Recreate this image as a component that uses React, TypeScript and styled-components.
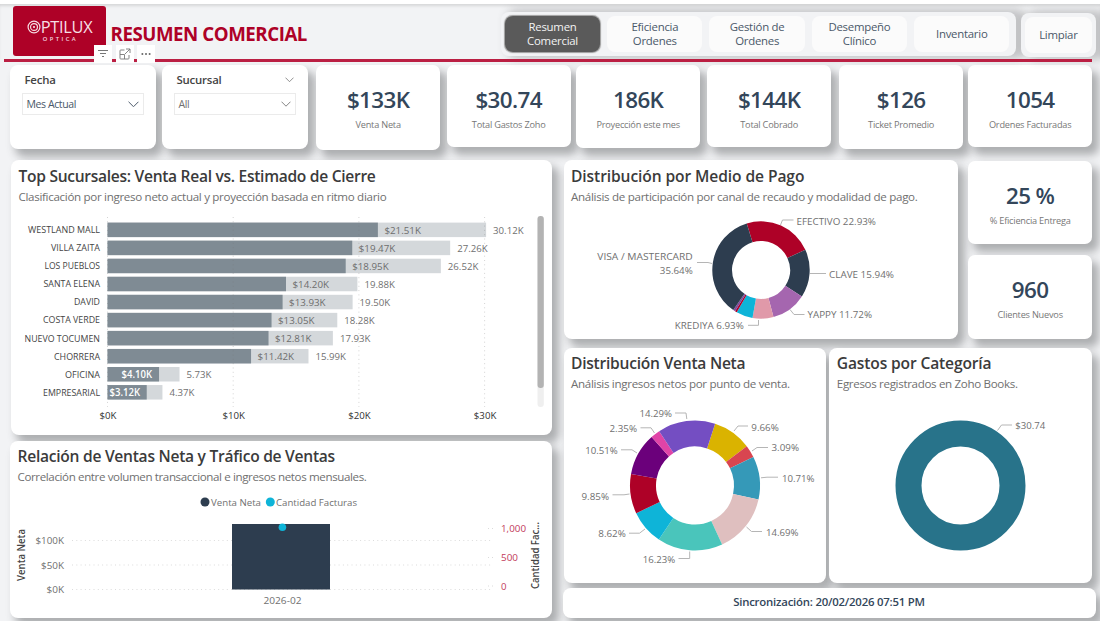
import React from "react";
import styled, { createGlobalStyle } from "styled-components";

const Global = createGlobalStyle`
  * { box-sizing: border-box; }
  html, body { margin: 0; padding: 0; }
  body { width: 1100px; height: 621px; overflow: hidden; background: #fff;
    font-family: "Segoe UI", "Open Sans", "Noto Sans", sans-serif; }
`;

const ink = "#33465a";
const crimson = "#ae0127";
const cardShadow = "6px 7px 9px 1px rgba(60, 62, 66, 0.38)";

const Page = styled.div`
  display: flex;
  flex-direction: column;
  width: 1100px;
  height: 617px;
  margin-top: 4px;
  background: #f2f3f5;
  overflow: hidden;
`;

const Header = styled.header`
  position: relative;
  display: flex;
  align-items: flex-start;
  height: 55px;
  padding-left: 13px;
  box-shadow: inset 0 3px 3px -1px #d6d7d8;
`;

const Logo = styled.div`
  display: flex;
  flex-direction: column;
  align-items: center;
  width: 93px;
  height: 49.5px;
  margin-top: 2px;
  padding-top: 12px;
  border-radius: 3px;
  background: ${crimson};
  color: #f6dfe4;
`;

const LogoWord = styled.div`
  display: flex;
  align-items: center;
  height: 18px;
  font: 400 16.4px/18px "Open Sans", sans-serif;
  letter-spacing: -0.3px;
`;

const LogoSub = styled.div`
  margin-left: 2px;
  font: 600 5.6px/6px Lato, sans-serif;
  letter-spacing: 2.5px;
`;

const PageTitle = styled.h1`
  width: 390.4px;
  margin: 17px 0 0 4.5px;
  color: ${crimson};
  font-size: 18.7px;
  line-height: 26px;
  font-weight: 700;
  letter-spacing: -0.45px;
`;

const Nav = styled.nav<{ $w: number; $ml?: number; $top?: number }>`
  display: flex;
  gap: 7px;
  width: ${(p) => p.$w}px;
  height: ${(p) => 44 - (p.$top ? 0.5 : 0)}px;
  margin: ${(p) => 8 + (p.$top ?? 0)}px 0 0 ${(p) => p.$ml ?? 0}px;
  padding: 3.5px 4px;
  border-radius: 8px;
  background: #f2f3f5;
  box-shadow: 8px 0 8px 3px rgba(60, 62, 66, 0.26);
`;

const Tab = styled.button<{ $active?: boolean; $w?: number }>`
  width: ${(p) => p.$w ?? 95.3}px;
  height: 36px;
  padding: 0;
  border: 0;
  border-radius: 8px;
  background: ${(p) => (p.$active ? "#5a5a5a" : "#fbfbfb")};
  color: ${(p) => (p.$active ? "#f3f3f3" : "#4a5869")};
  font: 400 11.4px/14px "Open Sans", sans-serif;
  letter-spacing: -0.25px;
  box-shadow: ${(p) => (p.$active ? "0 0 1px 0.5px #9d9d9d" : "none")};
`;

const VisualTools = styled.div`
  position: absolute;
  z-index: 2;
  left: 94px;
  top: 41px;
  display: flex;
  gap: 3.5px;
`;

const Tool = styled.span`
  display: flex;
  align-items: center;
  justify-content: center;
  width: 18px;
  height: 18px;
  background: #fff;
`;

const Rule = styled.div`
  position: relative;
  z-index: 1;
  flex: none;
  height: 2.5px;
  margin: 0 8px 3px 4px;
  background: #bb1f43;
`;

const CardRow = styled.div`
  display: grid;
  grid-template-columns: 152px 154px 130.5px 129.5px 131px 132px 129px 124.5px;
  align-items: start;
  height: 95.5px;
  padding: 0.5px 0 0 10px;
`;

const Card = styled.section<{ $w: number; $h: number; $r?: number }>`
  display: flex;
  flex-direction: column;
  flex: none;
  width: ${(p) => p.$w}px;
  height: ${(p) => p.$h}px;
  border-radius: ${(p) => p.$r ?? 8}px;
  background: #fff;
  box-shadow: ${cardShadow};
`;

const Slicer = styled(Card)`
  padding: 7px 12px 0 11.5px;
`;

const SlicerHead = styled.div`
  display: flex;
  justify-content: space-between;
  align-items: center;
  height: 15px;
  padding: 0 2px 0 3px;
  color: #444;
  font-size: 11.4px;
  font-weight: 600;
  letter-spacing: -0.2px;
`;

const Select = styled.div<{ $color: string }>`
  display: flex;
  justify-content: space-between;
  align-items: center;
  height: 22px;
  margin-top: 6px;
  padding: 0 4px;
  border: 1px solid #ebebeb;
  color: ${(p) => p.$color};
  font-size: 10.5px;
  letter-spacing: -0.4px;
`;

const Kpi = styled(Card)`
  align-items: center;
  padding-top: 19px;
`;

const KpiValue = styled.div`
  height: 31px;
  color: ${ink};
  font-size: 22.4px;
  line-height: 31px;
  font-weight: 600;
  letter-spacing: -0.6px;
`;

const KpiLabel = styled.div`
  margin-top: 2px;
  color: #777;
  font-size: 9.2px;
  line-height: 16px;
  letter-spacing: -0.22px;
`;

const Body = styled.main`
  display: flex;
  align-items: flex-start;
  gap: 12px;
  padding-left: 10px;
`;

const Column = styled.div<{ $gap: number; $top?: number }>`
  display: flex;
  flex-direction: column;
  align-items: flex-end;
  gap: ${(p) => p.$gap}px;
  padding-top: ${(p) => p.$top ?? 0}px;
`;

const Row = styled.div<{ $gap: number }>`
  display: flex;
  gap: ${(p) => p.$gap}px;
`;

const RightColumn = styled.div`
  display: flex;
  flex-direction: column;
  gap: 8.5px;
`;

const Panel = styled(Card)<{ $top?: number }>`
  padding-top: ${(p) => p.$top ?? 5.5}px;
`;

const PanelTitle = styled.h2<{ $track: number }>`
  margin: 0 0 0 7.5px;
  color: #3b3b3b;
  font-size: 15.6px;
  line-height: 20px;
  font-weight: 600;
  letter-spacing: ${(p) => p.$track}px;
  white-space: nowrap;
`;

const PanelNote = styled.p<{ $track: number }>`
  margin: 3px 0 0 7.5px;
  color: #707070;
  font-size: 11.6px;
  line-height: 16px;
  letter-spacing: ${(p) => p.$track}px;
  white-space: nowrap;
`;

const Chart = styled.svg`
  display: block;
  flex: none;
  margin-top: auto;
  overflow: visible;
  font-family: "Open Sans", sans-serif;
  font-size: 9.8px;
`;

const Sync = styled(Card)`
  align-items: center;
  justify-content: center;
  margin: -3px 0 0 -1px;
  padding-bottom: 4px;
  color: ${ink};
  font-size: 11.4px;
  font-weight: 600;
  letter-spacing: -0.22px;
`;

const Chevron = ({ size = 11, color = "#777" }) => (
  <svg width={size} height={size * 0.6} viewBox="0 0 10 6" fill="none" stroke={color} strokeWidth="0.9">
    <path d="M.5 .7 5 5.2 9.5 .7" />
  </svg>
);

interface LabelProps {
  x: number;
  y: number;
  w: number;
  children: string;
  fill?: string;
  anchor?: "start" | "middle" | "end";
  weight?: number;
  size?: number;
}

const Label = ({ x, y, w, children, fill = "#707070", anchor = "start", weight = 400, size }: LabelProps) => (
  <text x={x} y={y} textLength={w} lengthAdjust="spacingAndGlyphs" textAnchor={anchor} fill={fill} fontWeight={weight} fontSize={size}>
    {children}
  </text>
);

type Branch = [name: string, nameWidth: number, actual: number, estimate: number];

const branches: Branch[] = [
  ["WESTLAND MALL", 72, 21.51, 30.12],
  ["VILLA ZAITA", 49, 19.47, 27.26],
  ["LOS PUEBLOS", 55.5, 18.95, 26.52],
  ["SANTA ELENA", 56.5, 14.2, 19.88],
  ["DAVID", 26, 13.93, 19.5],
  ["COSTA VERDE", 57, 13.05, 18.28],
  ["NUEVO TOCUMEN", 75.5, 12.81, 17.93],
  ["CHORRERA", 46, 11.42, 15.99],
  ["OFICINA", 35, 4.1, 5.73],
  ["EMPRESARIAL", 57, 3.12, 4.37],
];

const BranchChart = () => {
  const x0 = 107.5;
  const k = 12.57;
  return (
    <Chart width="540" height="226" viewBox="11 209 540 226">
      {branches.map(([name, nw, actual, est], i) => {
        const y = 222.6 + i * 18.05;
        const inside = actual < 5;
        const end = x0 + actual * k;
        return (
          <g key={name}>
            <rect x={x0} y={y} width={est * k} height="14.5" fill="#d4d8db" />
            <rect x={x0} y={y} width={actual * k} height="14.5" fill="#7f8b94" />
            <Label x={100} y={y + 10.6} w={nw} anchor="end" fill="#444">{name}</Label>
            <Label
              x={inside ? Math.max(end - 37.5, 109.5) : end + 6.5}
              y={y + 11.2}
              w={inside ? 30.5 : 36.5}
              fill={inside ? "#fff" : "#6d6d6d"}
              weight={inside ? 600 : 400}
            >
              {`$${actual.toFixed(2)}K`}
            </Label>
            <Label x={x0 + est * k + 7} y={y + 11.2} w={est < 10 ? 25 : 30.5}>{`${est.toFixed(2)}K`}</Label>
          </g>
        );
      })}
      {[0, 10, 20, 30].map((v) => (
        <g key={v}>
          <path d={`M${x0 + v * k} 217V407`} stroke="#777" strokeOpacity="0.4" strokeWidth="0.8" strokeDasharray="1 3.3" />
          <Label x={x0 + v * k + 0.5} y={419} w={v ? 22.5 : 17} anchor="middle" fill="#333">{`$${v}K`}</Label>
        </g>
      ))}
      <rect x="537.5" y="216" width="6.3" height="191" rx="3" fill="#efefef" />
      <rect x="537.5" y="216" width="6.3" height="172" rx="3" fill="#b3b3b3" />
    </Chart>
  );
};

const TrafficChart = () => (
  <Chart width="541" height="128" viewBox="10 490 541 128">
    <circle cx="205" cy="502" r="4.5" fill="#2d3d4f" />
    <Label x={211} y={505.7} w={50}>Venta Neta</Label>
    <circle cx="270.3" cy="502" r="4.5" fill="#0eb4d8" />
    <Label x={276} y={505.7} w={81}>Cantidad Facturas</Label>
    {[540.5, 565, 589.5].map((y) => (
      <path key={y} d={`M72 ${y}H491`} stroke="#aaa" strokeOpacity="0.6" strokeWidth="0.7" strokeDasharray="1 3.3" />
    ))}
    {[528.5, 557.5, 586].map((y) => (
      <path key={y} d={`M488 ${y}H496`} stroke="#ccc" strokeWidth="0.7" strokeDasharray="1 3" />
    ))}
    <rect x="232" y="524" width="98" height="65.5" fill="#2d3d4f" />
    <circle cx="282.4" cy="527.2" r="3.8" fill="#0eb4d8" />
    <Label x={64} y={543.8} w={28.5} anchor="end">$100K</Label>
    <Label x={64} y={568.6} w={23} anchor="end">$50K</Label>
    <Label x={64} y={593} w={17.5} anchor="end">$0K</Label>
    <Label x={501} y={532} w={25} fill="#c23a5b">1,000</Label>
    <Label x={501} y={560.7} w={17} fill="#c23a5b">500</Label>
    <Label x={501} y={589.5} w={5.5} fill="#c23a5b">0</Label>
    <Label x={282.5} y={603.5} w={38} anchor="middle">2026-02</Label>
    <g transform="translate(25 581) rotate(-90)">
      <Label x={0} y={0} w={52} fill="#444" weight={600}>Venta Neta</Label>
    </g>
    <g transform="translate(539 589) rotate(-90)">
      <Label x={0} y={0} w={67} fill="#444" weight={600}>Cantidad Fac...</Label>
    </g>
  </Chart>
);

interface DonutProps {
  cx: number;
  cy: number;
  outer: number;
  inner: number;
  start: number;
  slices: [share: number, color: string][];
}

const Donut = ({ cx, cy, outer, inner, start, slices }: DonutProps) => {
  const total = slices.reduce((s, [v]) => s + v, 0);
  const at = (deg: number, r: number) => {
    const a = (deg * Math.PI) / 180;
    return `${(cx + r * Math.sin(a)).toFixed(2)} ${(cy - r * Math.cos(a)).toFixed(2)}`;
  };
  let from = start;
  return (
    <>
      {slices.map(([share, color], i) => {
        const a = from;
        const b = a + (share / total) * 360;
        from = b;
        const large = b - a > 180 ? 1 : 0;
        return (
          <path
            key={i}
            fill={color}
            d={`M${at(a, outer)}A${outer} ${outer} 0 ${large} 1 ${at(b, outer)}L${at(b, inner)}A${inner} ${inner} 0 ${large} 0 ${at(a, inner)}Z`}
          />
        );
      })}
    </>
  );
};

const Leader = ({ d }: { d: string }) => <path d={d} fill="none" stroke="#b5b5b5" strokeWidth="1" />;

const PaymentChart = () => (
  <Chart width="394" height="130" viewBox="564 209 394 130">
    <Donut
      cx={761} cy={270} outer={48.7} inner={29} start={-17}
      slices={[
        [22.93, crimson], [15.94, "#2d3d4f"], [11.72, "#a566af"], [6.93, "#e099a9"],
        [5.5, "#0eb4d8"], [0.65, "#ae0127"], [0.69, "#7f4aa0"], [35.64, "#2d3d4f"],
      ]}
    />
    <Leader d="M780.5 225 782.5 220H793.5" />
    <Label x={796.5} y={224.8} w={79.5}>EFECTIVO 22.93%</Label>
    <Leader d="M810 273.5H826" />
    <Label x={829} y={278} w={65}>CLAVE 15.94%</Label>
    <Leader d="M790 309.5 794 314.5H804.5" />
    <Label x={807.5} y={318} w={64.5}>YAPPY 11.72%</Label>
    <Leader d="M758.5 320V325.3H748" />
    <Label x={674.8} y={329} w={69}>KREDIYA 6.93%</Label>
    <Leader d="M712 263.5 708 262.5H697" />
    <Label x={692.8} y={260} w={95.5} anchor="end">VISA / MASTERCARD</Label>
    <Label x={692.8} y={273.8} w={33} anchor="end">35.64%</Label>
  </Chart>
);

const NetSalesChart = () => (
  <Chart width="262" height="184" viewBox="564 398.5 262 184">
    <Donut
      cx={695} cy={485} outer={65} inner={39} start={18}
      slices={[
        [9.66, "#dab300"], [3.09, "#d94550"], [10.71, "#3599b8"], [14.69, "#dfbfbf"], [16.23, "#4ac5bb"],
        [8.62, "#0eb4d8"], [9.85, crimson], [10.51, "#6b007b"], [2.35, "#e044a7"], [14.29, "#744ec2"],
      ]}
    />
    <Leader d="M686.8 418.5 686 412.5H675" />
    <Label x={639.5} y={416.7} w={32.5}>14.29%</Label>
    <Leader d="M654.5 432.5 651 427.3H640.5" />
    <Label x={609.5} y={431.3} w={27.5}>2.35%</Label>
    <Leader d="M637 452.5 632 449.3H621" />
    <Label x={585.3} y={453.2} w={32.5}>10.51%</Label>
    <Leader d="M629.5 493.5 624 494.3H612.5" />
    <Label x={581.5} y={499} w={27.5}>9.85%</Label>
    <Leader d="M645 528.5 639.5 532.7H629" />
    <Label x={598.3} y={536.7} w={27.5}>8.62%</Label>
    <Leader d="M689.7 551V558H678.5" />
    <Label x={642.7} y={562.3} w={32.5}>16.23%</Label>
    <Leader d="M734 430.5 738 425.5H748" />
    <Label x={751.3} y={430.2} w={27.5}>9.66%</Label>
    <Leader d="M752 450.5 757 447H768" />
    <Label x={771.5} y={450.8} w={27.5}>3.09%</Label>
    <Leader d="M761 477.3 767 476.7H778" />
    <Label x={782} y={481} w={32.5}>10.71%</Label>
    <Leader d="M746.5 526.5 751.5 531H762" />
    <Label x={766} y={535} w={32.5}>14.69%</Label>
  </Chart>
);

const ExpenseChart = () => (
  <Chart width="262" height="184" viewBox="829.5 398.5 262 184">
    <circle cx="961" cy="485" r="52" fill="none" stroke="#28738a" strokeWidth="26" />
    <Leader d="M998 430 1002 424.5H1012.5" />
    <Label x={1015.8} y={428.8} w={30}>$30.74</Label>
  </Chart>
);

const kpis: [string, string, number][] = [
  ["$133K", "Venta Neta", 84.5],
  ["$30.74", "Total Gastos Zoho", 82],
  ["186K", "Proyección este mes", 83],
  ["$144K", "Total Cobrado", 82],
  ["$126", "Ticket Promedio", 83.5],
  ["1054", "Ordenes Facturadas", 82],
];

const Metric = ({ value, label, h }: { value: string; label: string; h: number }) => (
  <Kpi $w={124.3} $h={h} $r={7}>
    <KpiValue>{value}</KpiValue>
    <KpiLabel>{label}</KpiLabel>
  </Kpi>
);

export default function App() {
  return (
    <>
      <Global />
      <Page>
        <Header>
          <Logo>
            <LogoWord>
              <svg width="14" height="14" viewBox="0 0 13 13" fill="none" stroke="#f6dfe4">
                <circle cx="6.5" cy="6.5" r="5.5" strokeWidth="1.1" />
                <circle cx="6.5" cy="6.5" r="3.2" strokeWidth="1.1" />
                <circle cx="6.5" cy="6.5" r="1" fill="#f6dfe4" stroke="none" />
              </svg>
              PTILUX
            </LogoWord>
            <LogoSub>OPTICA</LogoSub>
          </Logo>
          <PageTitle>RESUMEN COMERCIAL</PageTitle>
          <Nav $w={515}>
            <Tab $active>Resumen<br />Comercial</Tab>
            <Tab>Eficiencia<br />Ordenes</Tab>
            <Tab>Gestión de<br />Ordenes</Tab>
            <Tab>Desempeño<br />Clínico</Tab>
            <Tab>Inventario</Tab>
          </Nav>
          <Nav $w={75} $ml={5} $top={1}>
            <Tab $w={67}>Limpiar</Tab>
          </Nav>
          <VisualTools>
            <Tool>
              <svg width="12" height="12" viewBox="0 0 12 12" stroke="#777" strokeWidth="1">
                <path d="M1 2.5H11M3 5.5H9M5 8.5H7" />
              </svg>
            </Tool>
            <Tool>
              <svg width="12" height="12" viewBox="0 0 12 12" fill="none" stroke="#777" strokeWidth="0.9">
                <path d="M5.5 2H1.8Q1 2 1 2.8V10.2Q1 11 1.8 11H9.2Q10 11 10 10.2V7M7 1H11V5M11 1 6 6M1 6.5H5.5V11" />
              </svg>
            </Tool>
            <Tool>
              <svg width="10" height="4" viewBox="0 0 10 4" fill="#666">
                <circle cx="1.4" cy="2" r="1" />
                <circle cx="5" cy="2" r="1" />
                <circle cx="8.6" cy="2" r="1" />
              </svg>
            </Tool>
          </VisualTools>
        </Header>
        <Rule />
        <CardRow>
          <Slicer $w={146} $h={84}>
            <SlicerHead>Fecha</SlicerHead>
            <Select $color="#4a5869">Mes Actual<Chevron color="#4a5869" /></Select>
          </Slicer>
          <Slicer $w={146} $h={84}>
            <SlicerHead>Sucursal<Chevron size={9} /></SlicerHead>
            <Select $color="#707070">All<Chevron size={10} /></Select>
          </Slicer>
          {kpis.map(([v, l, h]) => (
            <Metric key={l} value={v} label={l} h={h} />
          ))}
        </CardRow>
        <Body>
          <Column $gap={6}>
            <Panel $w={540.5} $h={275}>
              <PanelTitle $track={-0.3}>Top Sucursales: Venta Real vs. Estimado de Cierre</PanelTitle>
              <PanelNote $track={-0.32}>Clasificación por ingreso neto actual y proyección basada en ritmo diario</PanelNote>
              <BranchChart />
            </Panel>
            <Panel $w={541.5} $h={177} $top={5}>
              <PanelTitle $track={-0.27}>Relación de Ventas Neta y Tráfico de Ventas</PanelTitle>
              <PanelNote $track={-0.39}>Correlación entre volumen transaccional e ingresos netos mensuales.</PanelNote>
              <TrafficChart />
            </Panel>
          </Column>
          <RightColumn>
            <Row $gap={10}>
              <Panel $w={394.5} $h={179}>
                <PanelTitle $track={-0.1}>Distribución por Medio de Pago</PanelTitle>
                <PanelNote $track={-0.3}>Análisis de participación por canal de recaudo y modalidad de pago.</PanelNote>
                <PaymentChart />
              </Panel>
              <Column $gap={11} $top={1}>
                <Metric value="25 %" label="% Eficiencia Entrega" h={83} />
                <Metric value="960" label="Clientes Nuevos" h={84} />
              </Column>
            </Row>
            <Row $gap={3.5}>
              <Panel $w={262.3} $h={235}>
                <PanelTitle $track={-0.25}>Distribución Venta Neta</PanelTitle>
                <PanelNote $track={-0.32}>Análisis ingresos netos por punto de venta.</PanelNote>
                <NetSalesChart />
              </Panel>
              <Panel $w={262.7} $h={235}>
                <PanelTitle $track={-0.15}>Gastos por Categoría</PanelTitle>
                <PanelNote $track={-0.34}>Egresos registrados en Zoho Books.</PanelNote>
                <ExpenseChart />
              </Panel>
            </Row>
            <Sync $w={533} $h={30}>Sincronización: 20/02/2026 07:51 PM</Sync>
          </RightColumn>
        </Body>
      </Page>
    </>
  );
}
